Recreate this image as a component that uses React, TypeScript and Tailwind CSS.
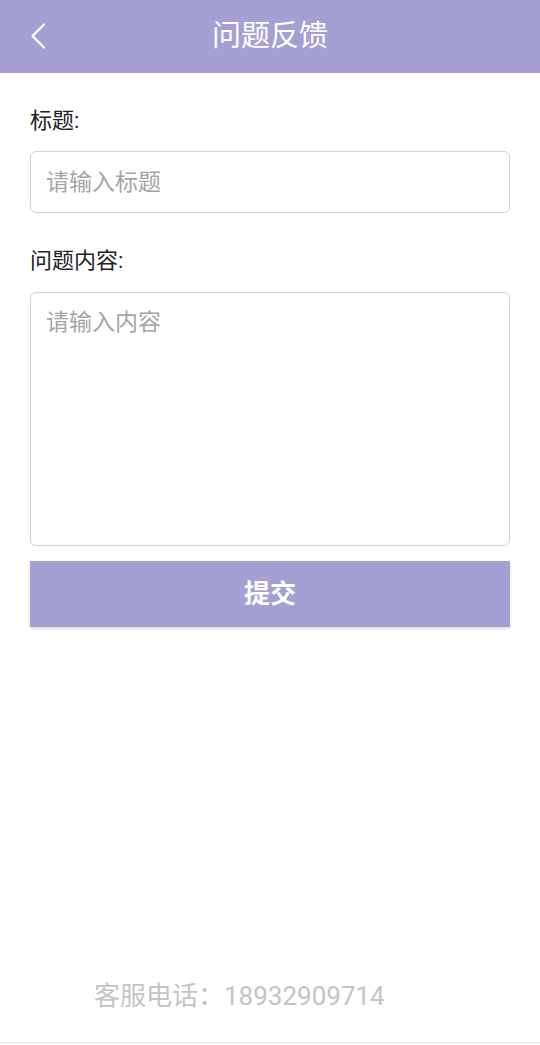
import { useState } from "react";

const FONT = { fontFamily: 'Roboto, "Noto Sans CJK SC", "Noto Sans", sans-serif' };

export default function App() {
  const [title, setTitle] = useState("");
  const [content, setContent] = useState("");

  return (
    <div className="flex h-[1045px] w-[540px] flex-col bg-white" style={FONT}>
      {/* header */}
      <div className="relative flex h-[73px] items-center justify-center bg-[#a5a0d4]">
        <button className="absolute left-[24px] top-[17px] p-1 text-white">
          <svg width="20" height="30" viewBox="0 0 20 30" fill="none">
            <path d="M16 3.5 L4.5 15 L16 26.5" stroke="white" strokeWidth="2.2" strokeLinecap="round" strokeLinejoin="round" />
          </svg>
        </button>
        <h1 className="text-[29px] leading-none text-white">问题反馈</h1>
      </div>

      <div className="flex flex-1 flex-col px-[30px]">
        <label className="mt-[36px] block text-[22px] leading-[24px] text-[#222]">标题:</label>
        <input
          value={title}
          onChange={(e) => setTitle(e.target.value)}
          placeholder="请输入标题"
          className="mt-[18px] h-[62px] w-full rounded-[6px] border border-[#d2d2d2] px-[15px] text-[23px] text-[#333] outline-none placeholder:text-[#a5a5a5]"
        />

        <label className="mt-[36px] block text-[22px] leading-[24px] text-[#222]">问题内容:</label>
        <textarea
          value={content}
          onChange={(e) => setContent(e.target.value)}
          placeholder="请输入内容"
          className="mt-[19px] h-[254px] w-full resize-none rounded-[6px] border border-[#d2d2d2] px-[15px] py-[15px] text-[23px] leading-[1.3] text-[#333] outline-none placeholder:text-[#a5a5a5]"
        />

        <button className="mt-[15px] h-[66px] w-full bg-[#a5a0d4] text-[26px] font-bold text-white shadow-[0_2px_3px_rgba(0,0,0,0.12)]">
          提交
        </button>

        <div className="flex-1" />

        <p className="mb-[33px] pl-[64px] text-[26px] leading-none text-[#c4c4c4]">客服电话：18932909714</p>
      </div>
      <div className="h-[3px] border-t border-[#e8e8e8]" />
    </div>
  );
}
